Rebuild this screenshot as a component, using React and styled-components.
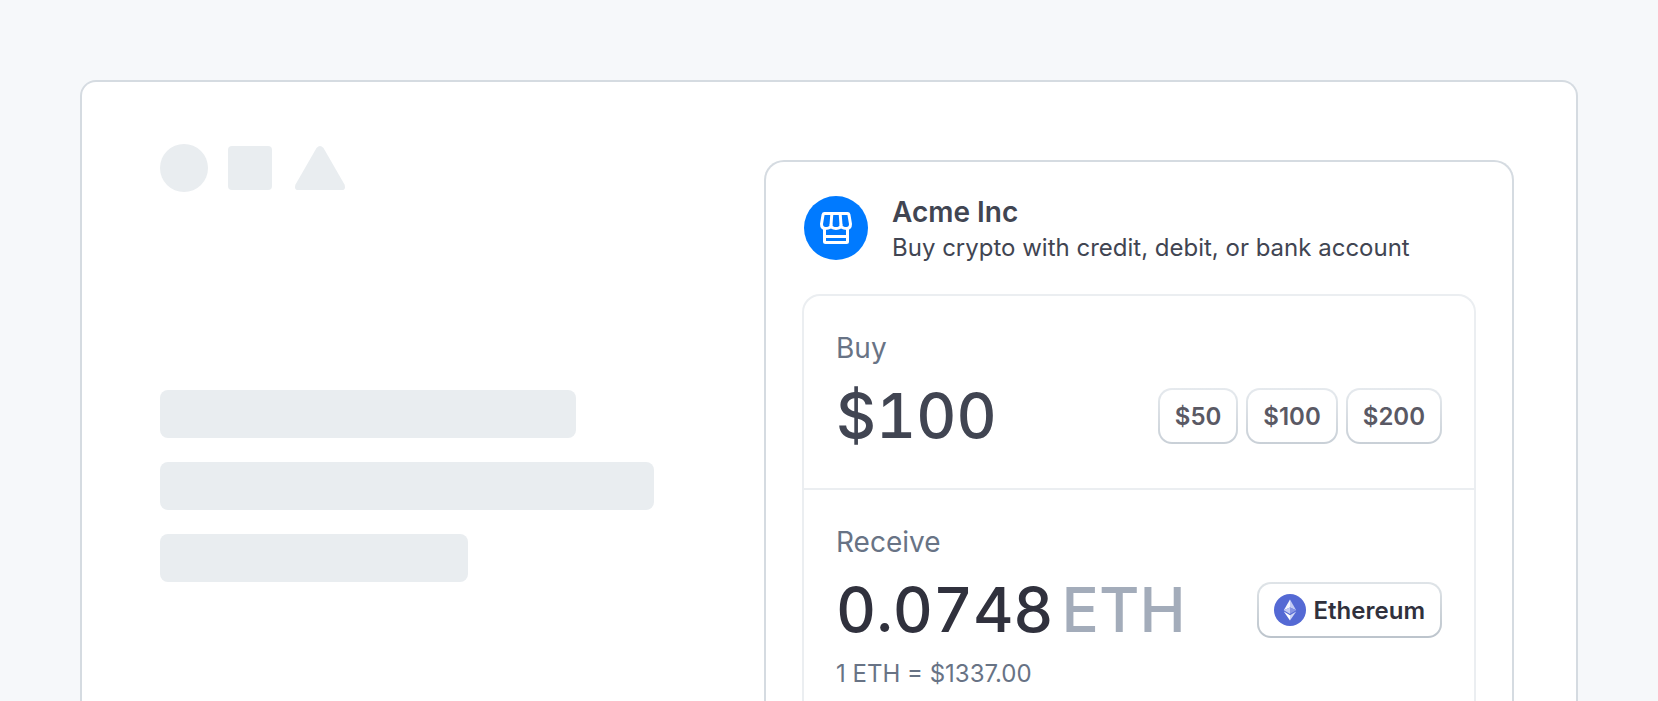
import React, { useState } from 'react';
import styled, { createGlobalStyle } from 'styled-components';

const GlobalStyle = createGlobalStyle`
  *,
  *::before,
  *::after {
    box-sizing: border-box;
  }

  body {
    margin: 0;
    background-color: #f6f8fa;
    font-family: Inter, 'Liberation Sans', sans-serif;
    color: #414552;
  }
`;

const Page = styled.div`
  display: flex;
  min-height: 100vh;
  padding: 80px 80px 0;
`;

const SitePanel = styled.main`
  display: flex;
  flex: 1;
  min-width: 0;
  justify-content: space-between;
  padding: 0 62px 0 78px;
  background-color: #fff;
  border: 2px solid #d5dbe1;
  border-bottom: none;
  border-radius: 16px 16px 0 0;
`;

const Placeholder = styled.div`
  flex: 1;
  min-width: 0;
  padding-top: 62px;
`;

const Shapes = styled.div`
  display: flex;
  align-items: center;
  gap: 20px;
  margin-bottom: 198px;
`;

const Circle = styled.div`
  width: 48px;
  height: 48px;
  border-radius: 50%;
  background-color: #e9edf0;
`;

const Square = styled.div`
  width: 44px;
  height: 44px;
  border-radius: 4px;
  background-color: #e9edf0;
`;

const Bars = styled.div`
  display: flex;
  flex-direction: column;
  gap: 24px;
`;

const Bar = styled.div`
  width: ${({ $width }) => $width}px;
  max-width: 90%;
  height: 48px;
  border-radius: 8px;
  background-color: #e9edf0;
`;

const Widget = styled.section`
  display: flex;
  flex-direction: column;
  flex: 0 1 750px;
  margin-top: 78px;
  padding: 34px 36px 0;
  border: 2px solid #d5dbe1;
  border-bottom: none;
  border-radius: 20px 20px 0 0;
`;

const Header = styled.header`
  display: flex;
  align-items: flex-start;
  gap: 24px;
  height: 64px;
  margin-bottom: 34px;
  padding: 0 2px;
`;

const Logo = styled.div`
  display: flex;
  align-items: center;
  justify-content: center;
  flex: none;
  width: 64px;
  height: 64px;
  border-radius: 50%;
  background-color: #007aff;
`;

const Title = styled.h1`
  margin: 0;
  font-size: 28px;
  font-weight: 600;
  line-height: 32px;
`;

const Subtitle = styled.p`
  margin: 0;
  font-size: 24px;
  line-height: 40px;
`;

const Quote = styled.div`
  flex: 1;
  border: 2px solid #ebeef1;
  border-bottom: none;
  border-radius: 18px 18px 0 0;
`;

const Section = styled.div`
  padding: 34px 32px 0;

  & + & {
    border-top: 2px solid #ebeef1;
  }
`;

const Label = styled.div`
  margin-bottom: 14px;
  color: #687385;
  font-size: 28px;
  line-height: 36px;
`;

const Row = styled.div`
  display: flex;
  align-items: center;
  justify-content: space-between;
  margin-bottom: ${({ $gap }) => $gap}px;
`;

const Amount = styled.div`
  display: flex;
  gap: 8px;
  color: ${({ $color }) => $color};
  font-size: 62px;
  font-weight: 500;
  font-variant-numeric: tabular-nums;
  line-height: 72px;
  white-space: nowrap;
`;

const Unit = styled.span`
  color: #a3acba;
`;

const Presets = styled.div`
  display: flex;
  gap: 8px;
`;

const Pill = styled.button`
  display: flex;
  align-items: center;
  gap: 8px;
  height: 56px;
  padding: 0 15px;
  border: 2px solid transparent;
  border-radius: 14px;
  background:
    linear-gradient(#fff, #fff) padding-box,
    linear-gradient(${({ $edge }) => $edge}) border-box;
  color: ${({ $color }) => $color};
  font-family: inherit;
  font-size: 24px;
  font-weight: 600;
  cursor: pointer;
`;

const Rate = styled.div`
  color: #687385;
  font-size: 24px;
  line-height: 32px;
`;

const presets = [50, 100, 200];

const TriangleShape = () => (
  <svg width="54" height="48" viewBox="0 0 54 48" fill="#e9edf0" aria-hidden="true">
    <path d="M24.5 4Q28 .2 31.5 4L52.5 40.5Q54.2 45.8 50 46H6Q1.8 45.8 3.5 40.5Z" />
  </svg>
);

const StoreIcon = () => (
  <svg
    width="32"
    height="32"
    viewBox="0 0 32 32"
    fill="none"
    stroke="#fff"
    strokeWidth="3"
    strokeLinejoin="round"
    aria-hidden="true"
  >
    <path d="M4.4 1.5H27.6Q28.6 1.5 28.9 2.6L30.5 12Q30.5 16.5 26.5 16.5C23.5 16.5 21.2 15.5 21 13C20.8 15.5 18.8 16.5 16 16.5S11.2 15.5 11 13C10.8 15.5 8.5 16.5 5.5 16.5Q1.5 16.5 1.5 12L3.1 2.6Q3.4 1.5 4.4 1.5Z" />
    <path d="M11.8 2L11 13M20.2 2L21 13" />
    <path d="M4.5 16.5V29.5Q4.5 30.5 5.5 30.5H26.5Q27.5 30.5 27.5 29.5V16.5M4.5 24.5H27.5" />
  </svg>
);

const EthereumIcon = () => (
  <svg width="32" height="32" viewBox="0 0 32 32" aria-hidden="true">
    <circle cx="16" cy="16" r="16" fill="#5469d4" />
    <path d="M16 5.5L9.8 16.2L16 13.5Z" fill="#f4f6fe" />
    <path d="M16 5.5L22.2 16.2L16 13.5Z" fill="#c3cbf4" />
    <path d="M16 13.5L9.8 16.2L16 20Z" fill="#c3cbf4" />
    <path d="M16 13.5L22.2 16.2L16 20Z" fill="#8795e4" />
    <path d="M9.8 17.5L16 21.3V26.5Z" fill="#fff" />
    <path d="M22.2 17.5L16 21.3V26.5Z" fill="#cdd4f6" />
  </svg>
);

const App = () => {
  const [amount, setAmount] = useState(100);

  return (
    <>
      <GlobalStyle />
      <Page>
        <SitePanel>
          <Placeholder>
            <Shapes>
              <Circle />
              <Square />
              <TriangleShape />
            </Shapes>
            <Bars>
              <Bar $width={416} />
              <Bar $width={494} />
              <Bar $width={308} />
            </Bars>
          </Placeholder>
          <Widget>
            <Header>
              <Logo>
                <StoreIcon />
              </Logo>
              <div>
                <Title>Acme Inc</Title>
                <Subtitle>Buy crypto with credit, debit, or bank account</Subtitle>
              </div>
            </Header>
            <Quote>
              <Section>
                <Label>Buy</Label>
                <Row $gap={36}>
                  <Amount $color="#414552">{`$${amount}`}</Amount>
                  <Presets>
                    {presets.map((value) => (
                      <Pill
                        key={value}
                        type="button"
                        $color="#5a5964"
                        $edge="#e6eaee, #c9d0d7"
                        onClick={() => setAmount(value)}
                      >
                        {`$${value}`}
                      </Pill>
                    ))}
                  </Presets>
                </Row>
              </Section>
              <Section>
                <Label>Receive</Label>
                <Row $gap={12}>
                  <Amount $color="#30313d">
                    0.0748
                    <Unit>ETH</Unit>
                  </Amount>
                  <Pill type="button" $color="#30313d" $edge="#dfe4e8, #bcc4cc">
                    <EthereumIcon />
                    Ethereum
                  </Pill>
                </Row>
                <Rate>1 ETH = $1337.00</Rate>
              </Section>
            </Quote>
          </Widget>
        </SitePanel>
      </Page>
    </>
  );
};

export default App;
